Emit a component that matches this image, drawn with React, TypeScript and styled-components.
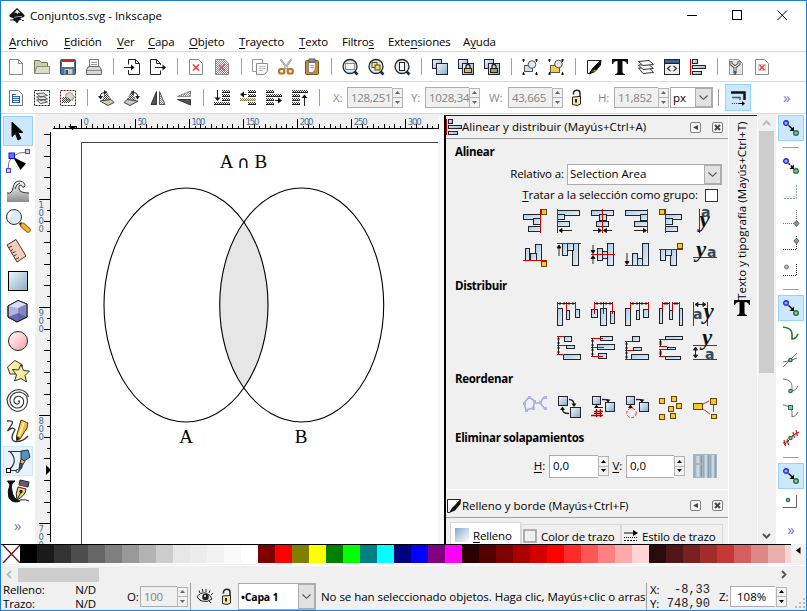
import React from 'react';
import styled, { createGlobalStyle, css } from 'styled-components';

const Global = createGlobalStyle`
  html, body { margin: 0; padding: 0; overflow: hidden; }
  body { font: 11.5px/16px "Open Sans", "Noto Sans", sans-serif; color: #000; }
  * { box-sizing: border-box; }
  u { text-decoration: underline; text-underline-offset: 2px; text-decoration-thickness: 1px; }
`;

/* ---------- window frame ---------- */
const Window = styled.div`
  width: 807px; height: 611px; background: #fff; border: 1px solid #1a7fd4;
  display: flex; flex-direction: column; overflow: hidden;
`;
const TitleBar = styled.div`
  height: 29px; flex: none; display: flex; align-items: center; padding-left: 8px;
`;
const Caption = styled.div`
  margin-left: 5px; flex: 1; letter-spacing: 0; padding-top: 1px;
`;
const WindowButtons = styled.div`
  display: flex; margin-right: 1px;
  svg { margin: 0 17px; }
`;
const MenuBar = styled.nav`
  height: 22px; flex: none; display: flex; gap: 14px; padding: 4px 0 0 8px; border-bottom: 1px solid #d8d8d8;
`;
const Label = styled.span<{ $w?: number; $ls?: number; $bold?: boolean; $right?: boolean; $dim?: boolean; $size?: number }>`
  display: block; flex: none; white-space: nowrap;
  ${p => p.$w !== undefined && css`width: ${p.$w}px;`}
  letter-spacing: ${p => p.$ls ?? -0.15}px;
  ${p => p.$bold && css`font-weight: 700;`}
  ${p => p.$right && css`text-align: right;`}
  ${p => p.$dim && css`color: #8a8a8a;`}
  ${p => p.$size && css`font-size: ${p.$size}px;`}
`;
const ToolBar = styled.div<{ $h: number }>`
  height: ${p => p.$h}px; flex: none; display: flex; align-items: center; padding-left: 2px;
  border-bottom: 1px solid #d8d8d8;
`;
const ToolButton = styled.div`
  width: 26px; height: 26px; flex: none; display: flex; align-items: center; justify-content: center;
`;
const Toggle = styled.div`
  width: 26px; height: 27px; margin-left: 1px; flex: none; background: #cce8ff; border: 1px solid #99d1ff;
  display: flex; align-items: center; justify-content: center;
`;
const Separator = styled.i<{ $w?: number }>`
  width: ${p => p.$w ?? 12}px; height: 17px; flex: none; display: flex; justify-content: center;
  &::before { content: ''; width: 1px; background: #a0a0a0; }
`;
const Icon = styled.svg`display: block; overflow: visible; flex: none;`;
const Gap = styled.i<{ $w: number }>`width: ${p => p.$w}px; flex: none;`;
const More = styled.div`
  font-size: 15px; line-height: 14px; color: #7474b0; height: 15px;
`;

/* ---------- fields ---------- */
const Field = styled.div<{ $w: number; $h?: number; $off?: boolean }>`
  width: ${p => p.$w}px; height: ${p => p.$h ?? 21}px; flex: none;
  border: 1px solid #abadb3; border-right-width: 0; background: ${p => (p.$off ? '#f0f0f0' : '#fff')};
  color: ${p => (p.$off ? '#838383' : '#000')}; padding-left: 3px; display: flex; align-items: center; white-space: nowrap;
  letter-spacing: ${p => (p.$off ? -0.32 : 0)}px;
`;
const SpinBox = styled.div`
  width: 11px; height: 20px; flex: none; display: flex; flex-direction: column;
`;
const SpinHalf = styled.div`
  flex: 1; border: 1px solid #b4b4b4; background: #f2f2f2; display: flex; align-items: center; justify-content: center;
  & + & { border-top: 0; }
`;
const Select = styled.div<{ $w: number; $h: number }>`
  width: ${p => p.$w}px; height: ${p => p.$h}px; flex: none; background: #fff; border: 1px solid #abadb3;
  display: flex; align-items: center; justify-content: space-between; padding-left: 2px;
`;
const SelectBox = styled.div`
  width: 17px; height: 100%; background: #e1e1e1; border: 1px solid #adadad; flex: none;
  display: flex; align-items: center; justify-content: center;
`;
const CheckBox = styled.i`width: 13px; height: 13px; border: 1px solid #333; background: #fff; flex: none;`;

/* ---------- main area ---------- */
const Main = styled.div`height: 431px; flex: none; display: flex; overflow: hidden;`;
const ToolBox = styled.div`
  width: 34px; flex: none; padding: 2px 0 0 2px; display: flex; flex-direction: column; align-items: flex-start;
`;
const Tool = styled.div<{ $on?: boolean; $hover?: boolean }>`
  width: 30px; height: 30px; flex: none; display: flex; align-items: center; justify-content: center;
  border: 1px solid transparent;
  ${p => p.$on && css`background: #cce8ff; border-color: #99d1ff;`}
  ${p => p.$hover && css`background: #e5f3ff; border-color: #cce8ff;`}
`;
const CanvasArea = styled.div`width: 409px; flex: none; background: #f0f0f0; overflow: hidden;`;
const Dock = styled.div`
  width: 313px; flex: none; margin-top: 1px; border: 1px solid #000; border-left-width: 2px; border-right: 0; border-bottom: 0;
  border-top: 1px solid #222; display: flex; overflow: hidden; background: #f0f0f0;
`;
const Panels = styled.div`width: 283px; flex: none; border-right: 1px solid #fff;`;
const PanelHead = styled.div<{ $h: number; $pt?: number }>`
  height: ${p => p.$h}px; display: flex; align-items: center; border-bottom: 1px solid #a0a0a0; width: 282px;
  padding-top: ${p => p.$pt ?? 0}px;
`;
const HeadTitle = styled(Label)`flex: 1;`;
const HeadButton = styled.div`
  width: 11px; height: 11px; border: 1px solid #808080; border-radius: 2px; margin-right: 11px; flex: none;
  display: flex; align-items: center; justify-content: center; background: #f6f6f6;
  &:last-child { margin-right: 5px; }
`;
const AlignBody = styled.div`
  height: 351px; padding-left: 9px; border-bottom: 1px solid #fff; overflow: hidden;
`;
const Row = styled.div<{ $h: number; $pl?: number; $pt?: number }>`
  height: ${p => p.$h}px; padding: ${p => p.$pt ?? 0}px 0 0 ${p => p.$pl ?? 0}px; display: flex; align-items: center;
`;
const IconGrid = styled.div<{ $cols: number }>`
  display: grid; grid-template-columns: repeat(${p => p.$cols}, 24px); grid-auto-rows: 24px; gap: 10px;
  margin-left: ${p => 68 + (6 - p.$cols) * 34}px;
`;
const Tabs = styled.div`display: flex; align-items: flex-end; padding: 5px 0 0 4px; height: 40px;`;
const Tab = styled.div<{ $w: number; $on?: boolean }>`
  width: ${p => p.$w}px; height: ${p => (p.$on ? 36 : 34)}px; border: 1px solid #d9d9d9; border-bottom: 0; flex: none;
  background: ${p => (p.$on ? '#fff' : '#f0f0f0')}; display: flex; align-items: flex-start;
  padding: ${p => (p.$on ? '5px 0 0 4px' : '4px 0 0 1px')}; gap: 4px;
`;
const SideTab = styled.div`
  flex: 1; display: flex; flex-direction: column; align-items: center; padding: 4px 2px 0 0;
`;
const SideText = styled.div`
  writing-mode: vertical-rl; transform: rotate(180deg); height: 180px; white-space: nowrap; letter-spacing: 0.07px;
`;
const VScroll = styled.div`
  width: 19px; flex: none; background: #f0f0f0; border-left: 1px solid #fff; display: flex; flex-direction: column; align-items: center;
  padding: 6px 2px 6px 1px;
`;
const VThumb = styled.i`width: 15px; height: 242px; background: #cdcdcd; margin-top: 5px; margin-bottom: auto;`;
const SnapBar = styled.div`
  width: 29px; flex: none; background: #fff; padding: 1px 0 0 1px; display: flex; flex-direction: column; align-items: center;
`;
const SnapItem = styled.div<{ $on?: boolean }>`
  width: 26px; height: 26px; flex: none; display: flex; align-items: center; justify-content: center;
  border: 1px solid ${p => (p.$on ? '#99d1ff' : 'transparent')}; background: ${p => (p.$on ? '#cce8ff' : 'transparent')};
`;
const SnapRule = styled.i`height: 12px; flex: none; width: 16px; display: flex; align-items: center;
  &::before { content: ''; height: 1px; width: 100%; background: #a0a0a0; }`;

/* ---------- bottom ---------- */
const PaletteRow = styled.div`
  height: 22px; flex: none; background: #f0f0f0; display: flex; border-bottom: 1px solid #fff; margin-top: -1px;
`;
const Palette = styled.div`
  width: 790px; height: 20px; flex: none; border-top: 1px solid #000; border-bottom: 1px solid #fff;
  display: flex; padding-left: 2px; overflow: hidden; background: #f0f0f0;
`;
const Swatch = styled.i<{ $c: string }>`width: 17px; height: 18px; flex: none; background: ${p => p.$c};`;
const HScroll = styled.div`
  height: 17px; flex: none; background: #f0f0f0; display: flex; align-items: center; padding: 0 19px 0 5px;
`;
const HThumb = styled.i`width: 81px; height: 14px; background: #cdcdcd; margin-left: 6px; margin-right: auto;`;
const Status = styled.div`
  flex: 1; background: #f0f0f0; display: flex; align-items: center; padding-left: 2px; overflow: hidden;
`;
const Pair = styled.div<{ $w: number }>`
  width: ${p => p.$w}px; flex: none; display: grid; grid-template-columns: auto auto; justify-content: space-between; line-height: 14px;
`;
const Message = styled.div`
  width: 325px; margin-left: 5px; flex: none; overflow: hidden; white-space: nowrap; letter-spacing: -0.05px;
`;
const StatusRule = styled.i`width: 1px; height: 28px; background: #a0a0a0; flex: none;`;
const Mono = styled.span`
  font: 12px/14px "Liberation Mono", monospace; text-align: right; white-space: pre; color: #222;
`;

/* ---------- small parts ---------- */
const Tri = ({ up, c = '#000' }: { up?: boolean; c?: string }) => (
  <Icon width="5" height="3" viewBox="0 0 5 3"><path d={up ? 'M0 3L2.5 0L5 3z' : 'M0 0H5L2.5 3z'} fill={c} /></Icon>
);
const Spin = ({ off }: { off?: boolean }) => (
  <SpinBox>
    <SpinHalf><Tri up c={off ? '#666' : '#000'} /></SpinHalf>
    <SpinHalf><Tri c={off ? '#666' : '#000'} /></SpinHalf>
  </SpinBox>
);
const SelectArrow = () => (
  <SelectBox>
    <Icon width="9" height="5" viewBox="0 0 9 5"><path d="M.5 .5L4.5 4.3L8.5 .5" fill="none" stroke="#505050" strokeWidth="1.1" /></Icon>
  </SelectBox>
);

const Defs = () => (
  <Icon width="0" height="0">
    <defs>
      <linearGradient id="blue" x1="0" y1="0" x2="1" y2="1"><stop offset="0" stopColor="#a9c8e4" /><stop offset="1" stopColor="#e6f0f8" /></linearGradient>
      <linearGradient id="steel" x1="0" y1="0" x2="1" y2="1"><stop offset="0" stopColor="#f2f7fb" /><stop offset="1" stopColor="#86abc9" /></linearGradient>
      <linearGradient id="fadeBlue" x1="0" y1="0" x2="1" y2="1"><stop offset="0" stopColor="#86abce" /><stop offset="1" stopColor="#fff" /></linearGradient>
      <linearGradient id="pink" x1="0" y1="0" x2="1" y2="1"><stop offset="0" stopColor="#fff" /><stop offset="1" stopColor="#f79ca6" /></linearGradient>
      <linearGradient id="sand" x1="0" y1="0" x2="1" y2="1"><stop offset="0" stopColor="#fbf7d8" /><stop offset="1" stopColor="#f0e06a" /></linearGradient>
      <linearGradient id="greyDown" x1="0" y1="0" x2="0" y2="1"><stop offset="0" stopColor="#fff" /><stop offset="1" stopColor="#8c8c8c" /></linearGradient>
      <linearGradient id="tubes" x1="0" y1="0" x2="1" y2="0"><stop offset="0" stopColor="#8aa0b2" /><stop offset=".5" stopColor="#d4e4f0" /><stop offset="1" stopColor="#7f8f9c" /></linearGradient>
      <pattern id="dots" width="2" height="2" patternUnits="userSpaceOnUse"><path d="M0 0h1v1H0zM1 1h1v1H1z" fill="#333" /></pattern>
      <pattern id="greyDots" width="2" height="2" patternUnits="userSpaceOnUse"><path d="M0 0h1v1H0zM1 1h1v1H1z" fill="#888" /></pattern>
      <pattern id="oliveDots" width="2" height="2" patternUnits="userSpaceOnUse"><path d="M0 0h1v1H0zM1 1h1v1H1z" fill="#857c45" /></pattern>
    </defs>
  </Icon>
);

const I16 = ({ children }: { children: React.ReactNode }) => (
  <Icon width="16" height="16" viewBox="0 0 16 16" fill="none" stroke="#222">{children}</Icon>
);
const pageShape = 'M1.5 .5H10.5L14.5 4.5V15.5H1.5z';
const Sq = ({ x, y, w = 10, h = 10 }: { x: number; y: number; w?: number; h?: number }) => (
  <rect x={x} y={y} width={w} height={h} fill="url(#steel)" stroke="#223" />
);
const Lens = ({ children }: { children?: React.ReactNode }) => (
  <I16><path d="M12 12L15.500 15.500" stroke="#1d2a33" strokeWidth="2.600" /><circle cx="8" cy="7.500" r="7" fill="#dde9f2" stroke="#1c2730" strokeWidth="1.300" />{children}</I16>
);
const Handles = () => <path d="M0 1H3M1.500 0V3M13 1H16M14.500 0V3M0 15H3M1.500 13V16M13 15H16M14.500 13V16" stroke="#111" />;
const Padlock = ({ c = '#f5bd2b' }: { c?: string }) => (
  <g><path d="M8 9.500V7.500a2 2 0 0 1 4 0V9.500" stroke="#222" strokeWidth="1.300" /><rect x="6.500" y="9.500" width="7" height="4" fill={c} stroke="#222" /></g>
);

const commandGroups: React.ReactNode[][] = [
  [
    <I16><path d={pageShape} fill="#fafafa" stroke="#8a8a84" /><path d="M10.500 .5V4.500H14.500" stroke="#8a8a84" /></I16>,
    <I16><path d="M.5 14V1.500H5.500L7 3.500H13.500V7" fill="#c6cfae" stroke="#70775c" /><path d="M.5 14.500L3 7.500H15.500V14.500z" fill="#d9dfc4" stroke="#8a9172" /></I16>,
    <I16><rect x=".5" y=".5" width="15" height="15" rx="1" fill="#4f74a6" stroke="#27446d" /><rect x="2" y="1" width="12" height="7" fill="#fff" stroke="none" /><rect x="2" y="0" width="12" height="3" fill="#d8221c" stroke="none" /><rect x="4" y="9.500" width="9" height="6" fill="#c5cdd3" stroke="#5b6b78" /><rect x="5.500" y="11" width="2.500" height="4" fill="#36506f" stroke="none" /></I16>,
    <I16><path d="M3.500 8V.5H12.500V8" fill="#fff" stroke="#777" /><path d="M5 3.500H11M5 5.500H11" stroke="#999" /><path d="M2.500 7.500L.5 11V15.500H15.500V11L13.500 7.500z" fill="#d9d9d9" stroke="#666" /><path d="M1 11.500H15" stroke="#888" /></I16>,
  ],
  [
    <I16><path d="M4.500 5.500V.5H11.500L15.500 4.500V15.500H4.500V11M11.500 .5V4.500H15.500" fill="none" /><path d="M0 8.500H8" /><path d="M7 5.500L10.500 8.500L7 11.500z" fill="#111" stroke="none" /></I16>,
    <I16><path d="M10.500 6V4.500L6.500 .5H.5V15.500H10.500V11.500M6.500 .5V4.500H10.500" /><path d="M5 8.500H14" /><path d="M12.500 5.500L16 8.500L12.500 11.500z" fill="#111" stroke="none" /></I16>,
  ],
  [
    <I16><path d={pageShape} fill="#fafafa" stroke="#8a8a84" /><path d="M5 5.500L11 11.500M11 5.500L5 11.500" stroke="#f03a3a" strokeWidth="1.600" /></I16>,
    <I16><path d={pageShape} fill="url(#greyDots)" stroke="#888" /><path d="M5 5.500L11 11.500M11 5.500L5 11.500" stroke="#c05a5a" strokeWidth="1.300" /></I16>,
  ],
  [
    <I16><path d="M.5 .5H10.500V12.500H.5z" fill="#fff" stroke="#9a9a9a" /><path d="M4.500 4.500H15.500V12L12.500 15.500H4.500z" fill="#fafafa" stroke="#8a8a8a" /><path d="M7 7.500H13M7 9.500H13M7 11.500H11" stroke="#bbb" /></I16>,
    <I16><path d="M2.500 0L9.500 10M13.500 0L6.500 10" stroke="#8a8a8a" strokeWidth="2" /><path d="M2.500 0L9.500 10M13.500 0L6.500 10" stroke="#ddd" strokeWidth=".8" /><rect x="1.200" y="10" width="5" height="4.500" rx="1.500" stroke="#b8741a" strokeWidth="2.200" /><rect x="9.700" y="10" width="5" height="4.500" rx="1.500" stroke="#b8741a" strokeWidth="2.200" /></I16>,
    <I16><rect x="1.500" y="1.500" width="13" height="14" rx="1" fill="#c08a38" stroke="#7a5214" /><path d="M4.500 3.500H11.500V10L9 13.500H4.500z" fill="#f4f4f2" stroke="#888" /><rect x="5" y="0" width="6" height="3" fill="#999" stroke="#555" /><path d="M6 6.500H10M6 8.500H10" stroke="#aaa" /></I16>,
  ],
  [
    <Lens><rect x="3.500" y="4.500" width="9" height="6" stroke="#222" strokeDasharray="1 1" fill="#fff" /></Lens>,
    <Lens><rect x="4" y="3.500" width="5" height="5" fill="#f8e4a4" stroke="#5c4a12" /><rect x="7" y="6" width="5" height="5" fill="#f8d060" stroke="#5c4a12" /></Lens>,
    <Lens><rect x="5.500" y="3.500" width="5" height="8" fill="#fff" stroke="#222" /></Lens>,
  ],
  [
    <I16><Sq x={.5} y={.5} w={9} h={9} /><Sq x={4.500} y={4.500} w={11} h={11} /></I16>,
    <I16><Sq x={.5} y={.5} w={9} h={9} /><Sq x={4.500} y={4.500} w={11} h={11} /><Padlock /></I16>,
    <I16><Sq x={.5} y={.5} w={9} h={9} /><Sq x={4.500} y={4.500} w={11} h={11} /><Padlock c="#8cad4c" /></I16>,
  ],
  [
    <I16><Handles /><rect x="2.500" y="6.500" width="8" height="6" fill="#cfdfeb" stroke="#456" /><circle cx="10" cy="5.500" r="3.800" fill="#dfeaf2" stroke="#456" /></I16>,
    <I16><Handles /><rect x="2.500" y="6.500" width="9" height="7" fill="#f4cc48" stroke="#654" /><circle cx="10.500" cy="5" r="3.800" fill="#dfeaf2" stroke="#456" /></I16>,
  ],
  [
    <I16><path d="M1.500 1.500H14.500L10 7L3.500 14.500H1.500z" fill="#fff" stroke="#222" /><path d="M15 1L14.500 6L9 12.500L3 15L7 9z" fill="#111" stroke="#111" /><path d="M5 13L9 10.500L10 12z" fill="#b99754" stroke="none" /></I16>,
    <I16><path d="M0 0H16V5H15Q14.500 2 10.500 2V13Q10.500 15 13 15V16H3V15Q5.500 15 5.500 13V2Q1.500 2 1 5H0z" fill="#0b0b0b" stroke="none" /></I16>,
    <I16><path d="M.5 9L11 8.500L15.500 13.500L5 14.500z" fill="#fff" stroke="#333" /><path d="M.5 6L11 5.500L15.500 9.500L5 10.500z" fill="#fff" stroke="#333" /><path d="M.5 2.500L11 1.500L15.500 5.500L5 6.500z" fill="#fff" stroke="#333" /></I16>,
    <I16><rect x=".5" y=".5" width="15" height="15" fill="#f0f0ee" stroke="#222" /><rect x="1" y="1" width="14" height="3" fill="#3d5f88" stroke="none" /><path d="M1 4.500H15" /><path d="M6.500 7L3.500 9.500L6.500 12M9.500 7L12.500 9.500L9.500 12" stroke="#333" strokeWidth="1.200" /></I16>,
    <I16><path d="M.5 0V16" stroke="#c00" /><Sq x={2.500} y={.5} w={5} h={4} /><Sq x={2.500} y={6.500} w={13} h={3} /><Sq x={2.500} y={12.500} w={9} h={3} /></I16>,
  ],
  [
    <I16><path d={pageShape} fill="#e6e6e2" stroke="#9a9a94" /><path d="M3 2V5L7 8L11 5V2M7 8V14" stroke="#444" strokeWidth="3" /><path d="M3 2.500V5L7 8L11 5V2.500M7 8V12" stroke="#e4e4e4" strokeWidth="1.300" /><path d="M7 12.500V16" stroke="#3c65a8" strokeWidth="2.400" /></I16>,
    <I16><path d={pageShape} fill="#fafafa" stroke="#8a8a84" /><rect x="4.500" y="5.500" width="7" height="6" fill="#f4f4f4" stroke="#ccc" /><path d="M5.500 6L10.500 11M10.500 6L5.500 11" stroke="#f03a3a" strokeWidth="1.400" /></I16>,
  ],
];

/* four stacked bars used by the stacking-order buttons */
const Bars = ({ wide, x }: { wide: number; x: number }) => (
  <g stroke="none">
    {[0, 4, 8, 12].map((y, i) => {
      const full = i === wide;
      return (
        <g key={y}>
          <rect x={full ? 0 : x} y={y} width={full ? 16 : 8} height="3" fill={full && (wide === 2) ? 'url(#oliveDots)' : 'url(#dots)'} />
          <rect x={full ? 0 : x} y={y + 2} width={full ? 16 : 8} height="1" fill="#222" opacity={full && wide === 2 ? .25 : 1} />
        </g>
      );
    })}
  </g>
);
const selectGroups: React.ReactNode[][] = [
  [
    <I16><path d={pageShape} fill="#fafafa" stroke="#777" /><path d="M4 4.500H8M4 6.500H12M4 8.500H12M4 10.500H12M4 12.500H12M4.500 4V13M11.500 6V13" stroke="#2f62a6" strokeWidth="1.100" /></I16>,
    <I16><rect x=".5" y=".5" width="15" height="15" stroke="#111" strokeDasharray="2 1" /><path d="M2.500 10L9.500 9.500L13.500 12L6.500 13.500zM2.500 7L9.500 6.500L13.500 9L6.500 10.500zM2.500 3.500L9.500 3L13.500 5.500L6.500 7z" fill="#e4e4e4" stroke="#555" /></I16>,
    <I16><rect x=".5" y=".5" width="15" height="15" stroke="#711" strokeDasharray="2 1" /><circle cx="9.500" cy="6.500" r="4" fill="#dcd8c4" stroke="#999" /><path d="M2 13V7H7L11 10L9 13z" fill="url(#dots)" stroke="none" /><path d="M12 11L15 6" stroke="#aa7" /></I16>,
  ],
  [
    <I16><path d="M2.500 7V5Q3 2.500 7 2.500" /><path d="M0 6H5L2.500 9.500zM6 0L9 2.500L6 5z" fill="#222" stroke="none" /><path d="M8 1L13 10L4 12z" fill="url(#dots)" stroke="#555" strokeDasharray="1 1" /><path d="M2 11L13 9.500L16 12.500L10 15.500z" fill="#d0cba8" stroke="#444" /></I16>,
    <I16><path d="M13.500 7V5Q13 2.500 9 2.500" /><path d="M11 6H16L13.500 9.500zM10 0L7 2.500L10 5z" fill="#222" stroke="none" /><path d="M8 1L3 10L12 12z" fill="url(#dots)" stroke="#555" strokeDasharray="1 1" /><path d="M14 11L3 9.500L0 12.500L6 15.500z" fill="#c8c8c0" stroke="#444" /></I16>,
    <I16><path d="M6.500 1.500V14.500H1z" fill="#555" stroke="#333" /><path d="M9.500 1.500V14.500H15z" fill="url(#greyDots)" stroke="#555" /></I16>,
    <I16><path d="M14.500 6.500H1.500L14.500 1z" fill="url(#greyDots)" stroke="#888" /><path d="M14.500 9.500H1.500L14.500 15z" fill="#555" stroke="#333" /></I16>,
  ],
  [
    <I16><Bars wide={3} x={8} /><path d="M3.500 0V10" /><path d="M.5 7.500H6.500L3.500 11z" fill="#111" stroke="none" /></I16>,
    <I16><Bars wide={2} x={8} /><path d="M1 4.500H6.500" /><path d="M4 1.500L0 4.500L4 7.500z" fill="#111" stroke="none" /></I16>,
    <I16><Bars wide={1} x={0} /><path d="M9 10.500H14" /><path d="M12 7.500L16 10.500L12 13.500z" fill="#111" stroke="none" /></I16>,
    <I16><Bars wide={0} x={0} /><path d="M12.500 6V16" /><path d="M9.500 8H15.500L12.500 4.500z" fill="#111" stroke="none" /></I16>,
  ],
];

/* ---------- toolbox drawings ---------- */
const T24 = ({ children }: { children: React.ReactNode }) => (
  <Icon width="24" height="24" viewBox="0 0 24 24" fill="none" stroke="#222">{children}</Icon>
);
const tools: React.ReactNode[] = [
  <T24><path d="M6 3V17.500L9.500 14.500L12 21L15 19.500L12 13.500H17z" fill="#000" stroke="#000" /></T24>,
  <T24><path d="M2 21Q1 3 22 3" stroke="#777" /><path d="M7 8L20 14.500L14.500 21z" fill="#000" stroke="none" /><rect x="3" y="4" width="5.500" height="5.500" fill="#6c6cff" stroke="#1414c8" /><rect x="19.500" y=".5" width="4" height="4" fill="#ccf" stroke="#4a4ad0" /><rect x=".5" y="19.500" width="4" height="4" fill="#ccf" stroke="#4a4ad0" /></T24>,
  <T24><path d="M1 14Q6 15 7 9Q8 2 14 2Q19 3 19 7Q17 10 15 6Q12 6 13 10Q14 14 23 14V23H1z" fill="url(#greyDown)" stroke="none" /><path d="M1 14Q6 15 7 9Q8 2 14 2Q19 3 19 7Q17 10 15 6Q12 6 13 10Q14 14 23 14M9 10Q10 5 14 4" stroke="#333" /></T24>,
  <T24><path d="M14 14L17 17" stroke="#111" strokeWidth="3" /><path d="M17 16.500L22 21" stroke="#9a6510" strokeWidth="5.600" strokeLinecap="round" /><path d="M17 16.500L22 21" stroke="#f3b32c" strokeWidth="3.600" strokeLinecap="round" /><circle cx="8" cy="8" r="7.500" fill="#dde9f3" stroke="#333" /><path d="M3 9Q3 3 9 3" stroke="#fff" strokeWidth="2" /></T24>,
  <T24><path d="M1 6L10 .5L20 17L11 23z" fill="#f5cdbd" stroke="#4d2f25" /><path d="M3 8.500L6 7M5 11.500L7 10.500M6.500 14L9.500 12.500M8 17L10.500 15.500M10 20L13 18.500" stroke="#4d2f25" /></T24>,
  <T24><rect x="2.500" y="2.500" width="19" height="19" fill="url(#steel)" stroke="#000" /></T24>,
  <T24><path d="M2 7L12 1.500L21 5V18L11 23L2 18z" fill="#b4b4e0" stroke="#222" /><path d="M2 7L12 9L21 5L12 1.500z" fill="#dcdcf4" stroke="none" /><path d="M12 9V22.500L21 18V5z" fill="#8286c2" stroke="none" /><path d="M2 18L12 14L21 18L11 23z" fill="#4d55a6" stroke="none" opacity=".75" /><path d="M2 7L12 1.500L21 5V18L11 23L2 18z" /></T24>,
  <T24><circle cx="12" cy="12" r="9.500" fill="url(#pink)" stroke="#222" /></T24>,
  <T24><path d="M1.500 8L9 1.500L16.500 6L14 15L4 15z" fill="url(#sand)" stroke="#333" /><path d="M15 5.500L17.500 11.500L23.500 12L19 16.500L20.500 23L15 19.500L8.500 22L10.500 16L6.500 10.500L12.500 11z" fill="url(#sand)" stroke="#333" /></T24>,
  <T24><path d="M12 12.500Q13.500 11 13.500 13Q13 15.500 10.500 15Q7.500 14 8 10.500Q9.500 6.500 14 7.500Q18.500 9.500 17.500 14.500Q15.500 19.500 10 19Q3.500 17 4 10Q6 3 13.500 3Q22 4.500 21.500 13Q20 22 10.500 22.500Q1.500 20 1 10Q4 1 13 .5Q21 1.500 22.500 8" stroke="#333" strokeWidth="1.100" /></T24>,
  <T24><path d="M1 2Q8 1 6 5L1.500 12Q7 7 9 11Q3 20 9 22.500Q17 23 22 17" stroke="#333" strokeWidth="1.300" /><path d="M15 1L22 4L21 9L14 20L10.500 21.500V17z" fill="#f5bb33" stroke="#4d3810" /><path d="M18 3L13 17" stroke="#fff3c0" strokeWidth="2" /><path d="M10.500 17L14 19L10.500 22z" fill="#222" stroke="none" /></T24>,
  <T24><path d="M2 2.500H15M4 2.500Q13 12 3 21M5 21.500H13Q18 18 15 12" stroke="#333" strokeWidth="1.200" /><path d="M15 2L22 1L24 8L18.500 12L15 10z" fill="#5b8fbe" stroke="#1d3446" /><path d="M15 10L19 12L17 15.500L14 14z" fill="#efb94a" stroke="#333" /><path d="M14 14L17 15.500L13 20z" fill="#3a6b99" stroke="#223" /><rect x=".5" y="19.500" width="4" height="4" fill="#fff" stroke="#000" /><circle cx="11.500" cy="22" r="1.500" fill="#fff" /></T24>,
  <T24><path d="M1.500 2H9Q4 4 6 12Q7 20 14 22Q7 25 3 19Q1 12 4 6z" fill="#111" stroke="#111" /><path d="M14 1L23 3L22 8L13 6z" fill="#43698e" stroke="#223" /><path d="M13.500 5L20 7" stroke="#c33" strokeWidth="2" /><path d="M12 8L20 10Q20 16 11 21Q9 15 12 8z" fill="#f2d37c" stroke="#222" /><path d="M11 21L15 13" /><circle cx="15" cy="12.500" r="1.300" fill="#222" /><path d="M14 21Q20 20 23 22" /></T24>,
];

/* ---------- align & distribute drawings ---------- */
type Box = [number, number, number, number];
interface Glyph { b?: Box[]; r?: string; k?: string; y?: [number, number]; }
const alignGlyphs: Glyph[] = [
  { b: [[.5, 5.500, 17, 5], [5.500, 17.500, 12, 5], [10.500, 9.500, 7, 6]], r: 'M17.500 0V24', y: [18.500, .5] },
  { b: [[.5, 1.500, 22, 5], [.5, 12.500, 12, 5], [.5, 5.500, 7, 5]], r: 'M.5 0V24', k: 'M2 21.500H15M2 21.500l3 -2v4z' },
  { b: [[.5, 1.500, 22, 5], [5.500, 12.500, 12, 5], [8.500, 5.500, 7, 6]], r: 'M11.500 0V24', k: 'M2 21.500H9M10.500 21.500l-3 -2v4zM21 21.500H14M12.500 21.500l3 -2v4z' },
  { b: [[.5, 1.500, 22, 5], [9.500, 12.500, 13, 5], [15.500, 5.500, 7, 6]], r: 'M22.500 0V24', k: 'M9 21.500H21M21.500 21.500l-3 -2v4z' },
  { b: [[6.500, 5.500, 16, 5], [6.500, 17.500, 12, 5], [6.500, 9.500, 7, 6]], r: 'M6.500 0V24', y: [.5, .5] },
  {},
  { b: [[2.500, 5.500, 4, 12], [12.500, 1.500, 6, 16], [7.500, 10.500, 6, 7]], r: 'M0 17.500H24', y: [18.500, 18.500] },
  { b: [[5.500, .5, 5, 12], [15.500, .5, 6, 22], [10.500, .5, 6, 7]], r: 'M0 .5H24', k: 'M2 2V13M2 2l-2 3h4z' },
  { b: [[6.500, 5.500, 5, 12], [16.500, .5, 6, 22], [11.500, 8.500, 5, 7]], r: 'M0 11.500H24', k: 'M2 2V9M2 10.500l-2 -3h4zM2 21V14M2 12.500l-2 3h4z' },
  { b: [[7.500, 10.500, 5, 12], [17.500, .5, 6, 22], [12.500, 15.500, 5, 7]], r: 'M0 22.500H24', k: 'M2 10V20M2 21.500l-2 -3h4z' },
  { b: [[1.500, 6.500, 5, 11], [11.500, 6.500, 6, 16], [6.500, 6.500, 6, 6]], r: 'M0 6.500H24', y: [18.500, .5] },
];
const distGlyphs: Glyph[] = [
  { b: [[.5, 6.500, 5, 17], [9.500, 8.500, 3, 9], [18.500, 7.500, 4, 8]], r: 'M.5 0V7M9.500 0V9M18.500 0V8', k: 'M1 1.500H18M3 0v3M7 0v3M12 0v3M16 0v3' },
  { b: [[.5, 7.500, 6, 8], [9.500, 6.500, 6, 17], [19.500, 9.500, 4, 12]], r: 'M3.500 0V12M12.500 0V12M21.500 0V12', k: 'M4 1.500H21M6 0v3M10 0v3M15 0v3M19 0v3' },
  { b: [[.5, 6.500, 5, 17], [11.500, 8.500, 3, 9], [18.500, 7.500, 5, 8]], r: 'M5.500 0V7M14.500 0V9M23.500 0V8', k: 'M6 1.500H23M8 0v3M12 0v3M17 0v3M21 0v3' },
  { b: [[.5, 6.500, 3, 15], [10.500, 8.500, 3, 9], [20.500, 6.500, 3, 17]], r: 'M3.500 0V7M10.500 0V9M13.500 0V9M20.500 0V7', k: 'M4 1.500H10M6 0v3M8 0v3M14 1.500H20M16 0v3M18 0v3' },
  {},
  { b: [[7.500, .5, 7, 5], [9.500, 9.500, 8, 3], [6.500, 18.500, 17, 5]], r: 'M0 .5H7M0 9.500H9M0 18.500H7', k: 'M1.500 1V18M0 3h3M0 7h3M0 12h3M0 16h3' },
  { b: [[9.500, .5, 12, 4], [6.500, 8.500, 17, 5], [7.500, 17.500, 8, 5]], r: 'M0 2.500H12M0 11.500H13M0 20.500H12', k: 'M1.500 3V20M0 5h3M0 9h3M0 14h3M0 18h3' },
  { b: [[7.500, .5, 7, 5], [8.500, 11.500, 8, 3], [6.500, 18.500, 17, 5]], r: 'M0 5.500H7M0 14.500H8M0 23.500H7', k: 'M1.500 6V23M0 8h3M0 12h3M0 17h3M0 21h3' },
  { b: [[6.500, .5, 17, 3], [8.500, 11.500, 8, 2], [6.500, 20.500, 15, 3]], r: 'M0 3.500H7M0 10.500H8M0 13.500H8M0 20.500H7', k: 'M1.500 4V10M0 6h3M0 8h3M1.500 14V20M0 16h3M0 18h3' },
];
const Yellow = ({ x, y, w = 5, h = 5 }: { x: number; y: number; w?: number; h?: number }) => (
  <rect x={x} y={y} width={w} height={h} fill="#fbc52b" stroke="#5d4407" />
);
const Boxes = ({ g }: { g: Glyph }) => (
  <T24>
    {g.b?.map((b, i) => <rect key={i} x={b[0]} y={b[1]} width={b[2]} height={b[3]} fill="url(#blue)" stroke="#1d262d" />)}
    {g.r && <path d={g.r} stroke="#d00000" />}
    {g.k && <path d={g.k} stroke="#111" fill="#111" strokeWidth=".9" />}
    {g.y && <Yellow x={g.y[0]} y={g.y[1]} />}
  </T24>
);
const GlyphA = styled.text`font: 700 14px "DejaVu Sans", sans-serif; fill: #33475f; stroke: none;`;
const GlyphY = styled.text`font: italic 700 23px "Liberation Serif", serif; fill: #111; stroke: none;`;
const alignIcons = alignGlyphs.map((g, i) => i === 5
  ? <T24><path d="M6.500 0V24" stroke="#d00000" /><GlyphY x="6.500" y="18">y</GlyphY><GlyphA x="8" y="8">a</GlyphA></T24>
  : <Boxes g={g} />);
alignIcons.push(<T24><path d="M0 14.500H24" stroke="#d00000" /><GlyphY x="3" y="14">y</GlyphY><GlyphA x="14" y="14">a</GlyphA></T24>);
const distIcons = distGlyphs.map((g, i) => i === 4
  ? <T24><path d="M.5 0V24M14.500 0V24" stroke="#d00000" /><path d="M2 2.500H13M2 2.500l3 -2v4zM13 2.500l-3 -2v4z" fill="#111" /><GlyphA x="0" y="17">a</GlyphA><GlyphY x="10.500" y="17">y</GlyphY></T24>
  : <Boxes g={g} />);
distIcons.push(<T24><path d="M0 9.500H24M0 23.500H24" stroke="#d00000" /><path d="M2.500 12V21M2.500 11l-2 3h4zM2.500 22l-2 -3h4z" fill="#111" /><GlyphY x="9" y="9">y</GlyphY><GlyphA x="12" y="23">a</GlyphA></T24>);

const Swap = ({ s, children }: { s: number; children?: React.ReactNode }) => (
  <T24>
    <path d={`M${s + 3} 4.500Q17 4.500 17 ${s === 9 ? 10 : 5}`} stroke="#222" strokeWidth="1.300" />
    <path d={s === 9 ? 'M14.500 8.500H19.500L17 12z' : 'M14.500 4.500H19.500L17 7.500z'} fill="#111" stroke="none" />
    <Sq x={1.500} y={1.500} w={s} h={s} /><Sq x={22.500 - s} y={s === 9 ? 12.500 : 7.500} w={s + 1} h={s === 9 ? 10 : 9} />{children}
  </T24>
);
const reorderIcons = [
  <T24><path d="M2 7L7 1L13 5L11 12L4 14L2 7M12 7L18 7L22 1M18 7L23 13" stroke="#a9a9dc" strokeWidth="1.600" transform="translate(-1 1)" /><path d="M0 7h3v3H0zM5 1h3v3H5zM10 5h3v3h-3zM9 12h3v3H9zM2 14h3v3H2zM16 6h3v3h-3zM21 1h3v3h-3zM21 12h3v3h-3z" fill="#a9b4f2" stroke="none" /></T24>,
  <Swap s={9}><path d="M5.500 14Q5 18.500 12 18.500" stroke="#222" strokeWidth="1.300" /><path d="M3 15H8L5.500 11.500z" fill="#111" stroke="none" /></Swap>,
  <Swap s={8}><path d="M3 13H8L5.500 9.500z" fill="#111" stroke="none" /><path d="M5 12.500H12" /><path d="M0 20.500H12M3 16.500H12M5.500 14V22M9.500 14V22" stroke="#c40000" strokeWidth="1.300" /><path d="M3 18.500H11" stroke="#111" /></Swap>,
  <Swap s={8}><path d="M3 13H8L5.500 9.500z" fill="#111" stroke="none" /><circle cx="6.500" cy="18" r="4.700" stroke="#e03030" strokeDasharray="3 1.500" /></Swap>,
  <T24><Yellow x={.5} y={3.500} /><Yellow x={12.500} y={1.500} /><Yellow x={17.500} y={8.500} /><Yellow x={9.500} y={11.500} /><Yellow x={.5} y={19.500} /><Yellow x={11.500} y={18.500} /></T24>,
  <T24><path d="M10 9L16 6M10 14L17 19M20.500 10V17" stroke="#e02020" /><Yellow x={.5} y={8.500} w={9} h={6} /><Yellow x={17.500} y={3.500} w={6} h={6} /><Yellow x={18.500} y={19.500} h={4} /></T24>,
];

/* ---------- snap bar drawings ---------- */
const S16 = ({ children }: { children: React.ReactNode }) => (
  <Icon width="16" height="16" viewBox="0 0 16 16" fill="none" stroke="#777">{children}</Icon>
);
const SnapMain = ({ faint }: { faint?: boolean }) => (
  <S16><circle cx="3" cy="3" r="2.300" fill="#a9b4ff" stroke="#2424e0" strokeWidth="1.400" /><circle cx="13" cy="13" r="2.300" fill="#9fb6c8" stroke="#1f7a2c" strokeWidth="1.400" /><path d="M5.500 5.500L9.500 9" stroke="#000" strokeWidth="1.400" strokeDasharray={faint ? '2 1' : undefined} /><path d="M11 6.500V11H6.500z" fill="#000" stroke="none" /></S16>
);
const Dot = ({ x, y }: { x: number; y: number }) => <circle cx={x} cy={y} r="1.700" fill="#9fb6c8" stroke="#1f7a2c" strokeWidth="1.200" />;
const curve = 'M0 1Q9 2 9 8V13Q13 13 15 8';
const snapGroups: { on?: boolean; n: React.ReactNode }[][] = [
  [{ on: true, n: <SnapMain /> }],
  [
    { n: <SnapMain faint /> },
    { n: <S16><path d="M13.500 1V14.500H0" stroke="#86a886" strokeDasharray="2 1" /><path d="M11.500 12.500H0" stroke="#ccc" strokeDasharray="1 1" /></S16> },
    { n: <S16><path d="M13.500 0V13.500H0" stroke="#777" strokeDasharray="1 1" /><path d="M13.500 10.500L16 13.500L13.500 16.500L11 13.500z" fill="#899" stroke="#566" /></S16> },
    { n: <S16><path d="M13.500 0V13.500H0" stroke="#333" strokeDasharray="1 1" /><path d="M13.500 2L16 5L13.500 8L11 5z" fill="#899" stroke="#566" /></S16> },
    { n: <S16><path d="M13.500 2V13.500H0" stroke="#333" strokeDasharray="1 1" /><circle cx="3.500" cy="5" r="2" fill="#abb" stroke="#687" /></S16> },
  ],
  [
    { on: true, n: <SnapMain /> },
    { n: <S16><path d={curve} stroke="#16801c" strokeWidth="1.600" /></S16> },
    { n: <S16><path d="M0 15L14 1M0 10Q8 9 14 6" stroke="#666" /><Dot x={7.500} y={8} /></S16> },
    { n: <S16><path d={curve} /><Dot x={7.500} y={13} /></S16> },
    { n: <S16><path d={curve} /><rect x="5.500" y="1.500" width="4" height="4" fill="#9fb6c8" stroke="#1f7a2c" /></S16> },
    { n: <S16><path d="M1 15L14 2" stroke="#333" strokeDasharray="3 1" /><path d="M1 10L2.500 16M4 9L5.500 15M0 13L6 11M10 2L11.500 8M13 0L14.500 6M9 6L16 2" stroke="#c62020" strokeWidth="1.200" /><Dot x={7.500} y={8} /></S16> },
  ],
  [
    { on: true, n: <SnapMain /> },
    { n: <S16><path d="M13.500 1V13.500H0" stroke="#666" /><Dot x={5} y={6} /></S16> },
  ],
];

/* ---------- drawing canvas with rulers ---------- */
const RulerText = styled.text`font: 8.500px "DejaVu Sans", sans-serif; fill: #4a6a94;`;
const ArtText = styled.text`font: 19px "Liberation Serif", serif; fill: #000; text-anchor: middle;`;
const Cap = styled.tspan`font: 17px "DejaVu Sans", sans-serif;`;
const Canvas = () => {
  const hTicks: string[] = [];
  for (let i = -5; i * 5.405 + 46.500 < 404; i++) {
    const x = Math.round(46 + i * 5.405) + .5;
    const len = i % 10 === 0 ? 10 : i % 2 === 0 ? 5 : 3;
    if (x > 17) hTicks.push(`M${x} ${15 - len}V15`);
  }
  const vTicks: string[] = [];
  for (let i = -6; i < 32; i++) {
    const y = Math.round(85 + i * 10.81) + .5;
    const len = i % 10 === 0 ? 11 : i % 2 === 0 ? 6 : 3;
    if (y > 18) vTicks.push(`M${15 - len} ${y}H15`);
  }
  return (
    <svg width="409" height="431" viewBox="0 0 409 431">
      <rect x="16" y="16" width="387" height="415" fill="#fff" />
      <rect x="403" y="2" width="6" height="429" fill="#f8f8f8" />
      <path d="M18 14.500H403M15.500 18V428" stroke="#000" />
      <path d={hTicks.join('') + vTicks.join('')} stroke="#000" />
      <path d="M33 12H42L37.500 16zM11 351V361L16 356z" fill="#000" />
      {[0, 50, 100, 150, 200, 250, 300].map((n, i) => <RulerText key={n} x={48.500 + i * 54.050} y="11" textLength={String(n).length * 4.600}>{n}</RulerText>)}
      {['1000', '900', '800', '700'].map((n, i) => n.split('').map((c, j) => i * 108.100 + j * 8 < 345 && <RulerText key={n + j} x="3.500" y={93.500 + i * 108.100 + j * 8}>{c}</RulerText>))}
      <path d="M46.500 431V28.500H403" stroke="#444" fill="none" />
      <path d="M209 107.500A82 117 0 0 1 209 274.500A82 117 0 0 1 209 107.500z" fill="#e6e6e6" />
      <g fill="none" stroke="#000" strokeWidth="1.100">
        <ellipse cx="151" cy="191" rx="82" ry="117" />
        <ellipse cx="266.700" cy="191" rx="82" ry="117" />
      </g>
      <ArtText x="208.500" y="54">A <Cap>∩</Cap> B</ArtText>
      <ArtText x="151" y="329">A</ArtText>
      <ArtText x="266" y="329">B</ArtText>
    </svg>
  );
};

const menus: [string, string, string, number][] = [
  ['', 'A', 'rchivo', 41], ['', 'E', 'dición', 39], ['', 'V', 'er', 17], ['', 'C', 'apa', 27], ['', 'O', 'bjeto', 36],
  ['', 'T', 'rayecto', 46], ['', 'T', 'exto', 29], ['Filtro', 's', '', 32], ['Exte', 'n', 'siones', 61], ['A', 'y', 'uda', 34],
];
const swatches = (
  '000000 1a1a1a 333333 4d4d4d 666666 808080 999999 b3b3b3 cccccc e6e6e6 ececec f2f2f2 f9f9f9 ffffff ' +
  '800000 ff0000 808000 ffff00 008000 00ff00 008080 00ffff 000080 0000ff 800080 ff00ff ' +
  '2b0000 550000 800000 aa0000 d40000 ff0000 ff2a2a ff5555 ff8080 ffaaaa ffd5d5 ' +
  '280b0b 501616 782121 a02c2c c83737 d35f5f de8787 e9afaf f4d7d7'
).split(' ');

const Groups = ({ groups }: { groups: React.ReactNode[][] }) => (
  <>{groups.map((g, i) => (
    <React.Fragment key={i}>{i > 0 && <Separator />}{g.map((n, j) => <ToolButton key={j}>{n}</ToolButton>)}</React.Fragment>
  ))}</>
);
const OpenLock = () => (
  <I16><path d="M4.500 4.500V3a3 2.500 0 0 1 6.500 0V7" stroke="#222" strokeWidth="1.500" /><path d="M3.500 7L11.500 6.500V14L8 15.500L3.500 14.500z" fill="#f2e6a0" stroke="#222" /><path d="M7 9V12.500" strokeWidth="2" /></I16>
);
const HeadButtons = () => (
  <>
    <HeadButton><Icon width="5" height="5" viewBox="0 0 5 5"><path d="M5 0V5L0 2.500z" fill="#444" /></Icon></HeadButton>
    <HeadButton><Icon width="7" height="7" viewBox="0 0 7 7"><path d="M1 1L6 6M6 1L1 6" stroke="#444" strokeWidth="2" /></Icon></HeadButton>
  </>
);
const Cells = ({ cols, icons }: { cols: number; icons: React.ReactNode[] }) => (
  <IconGrid $cols={cols}>{icons.map((n, i) => <React.Fragment key={i}>{n}</React.Fragment>)}</IconGrid>
);

export default function App() {
  return (
    <Window>
      <Global />
      <TitleBar>
        <Icon width="16" height="16" viewBox="0 0 16 16">
          <path d="M8 0L15.500 7Q16 9 13 9.500L11 10.500L13 11.500L10 12.500L8 15.500L6 13L2.500 12L5 10.500L1 9Q0 8 .5 7z" fill="#151515" />
          <path d="M8 1.500L11.500 5L9.500 4.500L8.500 6L7 4.500L5 5.500z" fill="#e8eef4" /><path d="M5 9.500Q9 8 13 8.500" stroke="#7f93a6" fill="none" />
          <path d="M1 11.500h2v1H1zM13 12h2v1h-2z" fill="#333" />
        </Icon>
        <Caption>Conjuntos.svg - Inkscape</Caption>
        <WindowButtons>
          <Icon width="11" height="11" viewBox="0 0 11 11"><path d="M0 5.500H10" stroke="#000" /></Icon>
          <Icon width="11" height="11" viewBox="0 0 11 11"><rect x=".5" y=".5" width="9" height="9" fill="none" stroke="#000" /></Icon>
          <Icon width="11" height="11" viewBox="0 0 11 11"><path d="M.5 .5L10 10M10 .5L.5 10" stroke="#000" /></Icon>
        </WindowButtons>
      </TitleBar>
      <MenuBar>
        {menus.map(([a, b, c, w]) => <Label key={a + b + c} $w={w}>{a}<u>{b}</u>{c}</Label>)}
      </MenuBar>
      <ToolBar $h={30}><Groups groups={commandGroups} /></ToolBar>
      <ToolBar $h={32}>
        <Groups groups={selectGroups} />
        <Separator /><Gap $w={8} />
        <Label $dim $w={14}>X:</Label><Field $w={45} $off>128,251</Field><Spin off />
        <Gap $w={8} /><Label $dim $w={14}>Y:</Label><Field $w={44} $off>1028,34</Field><Spin off />
        <Gap $w={9} /><Label $dim $w={19}>W:</Label><Field $w={44} $off>43,665</Field><Spin off />
        <Gap $w={6} /><OpenLock /><Gap $w={13} />
        <Label $dim $w={16}>H:</Label><Field $w={44} $off>11,852</Field><Spin off />
        <Gap $w={1} /><Select $w={43} $h={21}>px<SelectArrow /></Select>
        <Separator $w={11} />
        <Toggle><Icon width="16" height="16" viewBox="0 0 16 16"><path d="M1 2.500H14.500V10" stroke="#111" strokeWidth="2.500" fill="none" /><path d="M2 7.500H10V10" stroke="#555" strokeWidth="1.500" fill="none" /><path d="M2 13.500H9" stroke="#333" strokeDasharray="1 1" /><path d="M9 13.500H13" stroke="#000" /><path d="M12 11L15 13.500L12 16z" /></Icon></Toggle>
        <Gap $w={32} /><More>»</More>
      </ToolBar>
      <Main>
        <ToolBox>
          {tools.map((n, i) => <Tool key={i} $on={i === 0} $hover={i === 11}>{n}</Tool>)}
          <Row $h={46} $pl={11}><More>»</More></Row>
        </ToolBox>
        <CanvasArea><Canvas /></CanvasArea>
        <Dock>
          <Panels>
            <PanelHead $h={23}>
              <Icon width="16" height="16" viewBox="0 0 16 16"><path d="M.5 0V16" stroke="#c00" /><Sq x={2.500} y={.5} w={4} h={4} /><Sq x={2.500} y={6.500} w={13} h={3} /><Sq x={2.500} y={12.500} w={9} h={3} /></Icon>
              <HeadTitle $ls={0.05}>Alinear y distribuir (Mayús+Ctrl+A)</HeadTitle><HeadButtons />
            </PanelHead>
            <AlignBody>
              <Row $h={25}><Label $bold $ls={-.3}>Alinear</Label></Row>
              <Row $h={20}><Label $w={109} $right $ls={-.1}>Relativo a:</Label><Gap $w={3} /><Select $w={155} $h={21}>Selection Area<SelectArrow /></Select></Row>
              <Row $h={22}><Label $w={243} $right $ls={-.05}><u>T</u>ratar a la selección como grupo:</Label><Gap $w={7} /><CheckBox /></Row>
              <Row $h={3} />
              <Cells cols={6} icons={alignIcons} />
              <Row $h={35} $pt={3}><Label $bold $ls={-.3}>Distribuir</Label></Row>
              <Cells cols={5} icons={distIcons} />
              <Row $h={35} $pt={3}><Label $bold $ls={-.3}>Reordenar</Label></Row>
              <Cells cols={6} icons={reorderIcons} />
              <Row $h={38}><Label $bold $ls={-.3}>Eliminar solapamientos</Label></Row>
              <Row $h={18}>
                <Label $w={90} $right><u>H</u>:</Label><Gap $w={4} /><Field $w={49} $h={23}>0,0</Field><Spin />
                <Label $w={13} $right><u>V</u>:</Label><Gap $w={4} /><Field $w={48} $h={23}>0,0</Field><Spin />
                <Gap $w={8} />
                <Icon width="24" height="24" viewBox="0 0 24 24"><rect x="0" y="0" width="24" height="24" fill="#a5b5c2" /><rect x="1" y="2" width="8" height="7" fill="url(#tubes)" /><rect x="1" y="11" width="8" height="12" fill="url(#tubes)" /><rect x="10" y="1" width="6" height="23" fill="url(#tubes)" /><rect x="17" y="1" width="6" height="23" fill="url(#tubes)" /></Icon>
              </Row>
            </AlignBody>
            <PanelHead $h={28} $pt={4}>
              <Icon width="16" height="16" viewBox="0 0 16 16"><path d="M1.500 1.500H14.500L10 7L3.500 14.500H1.500z" fill="#fff" stroke="#222" /><path d="M15 1L14.500 6L9 12.500L3 15L6 10z" fill="#111" /></Icon>
              <HeadTitle $ls={0}>Relleno y borde (Mayús+Ctrl+F)</HeadTitle><HeadButtons />
            </PanelHead>
            <Tabs>
              <Tab $w={71} $on><Icon width="14" height="14" viewBox="0 0 14 14"><rect width="14" height="14" fill="url(#fadeBlue)" /></Icon><Label><u>R</u>elleno</Label></Tab>
              <Tab $w={100}><Icon width="14" height="14" viewBox="0 0 14 14"><rect x="1" y="1" width="12" height="12" fill="none" stroke="#999" strokeWidth="1.500" /></Icon><Label>Color de trazo</Label></Tab>
              <Tab $w={102}><Icon width="15" height="14" viewBox="0 0 15 14"><path d="M1 4H12" stroke="#111" /><path d="M10 1L15 4L10 7z" /><path d="M1 8.500H14" stroke="#111" strokeDasharray="1 1" /><path d="M1 11.500H14" stroke="#111" strokeDasharray="2 1" /></Icon><Label>Estilo de trazo</Label></Tab>
            </Tabs>
          </Panels>
          <SideTab>
            <SideText>Texto y tipografía (Mayús+Ctrl+T)</SideText>
            <Icon width="16" height="16" viewBox="0 0 16 16"><path d="M0 0H16V5H15Q14.500 2 10.500 2V13Q10.500 15 13 15V16H3V15Q5.500 15 5.500 13V2Q1.500 2 1 5H0z" /></Icon>
          </SideTab>
        </Dock>
        <VScroll>
          <Icon width="9" height="6" viewBox="0 0 9 6"><path d="M1 5L4.500 1.500L8 5" fill="none" stroke="#bababa" strokeWidth="2" /></Icon>
          <VThumb />
          <Icon width="9" height="6" viewBox="0 0 9 6"><path d="M1 1L4.500 4.500L8 1" fill="none" stroke="#555" strokeWidth="2" /></Icon>
        </VScroll>
        <SnapBar>
          {snapGroups.map((g, i) => (
            <React.Fragment key={i}>{i > 0 && <SnapRule />}{g.map((s, j) => <SnapItem key={j} $on={s.on}>{s.n}</SnapItem>)}</React.Fragment>
          ))}
          <Row $h={28}><More>»</More></Row>
        </SnapBar>
      </Main>
      <PaletteRow>
        <Palette>
          <Icon width="17" height="18" viewBox="0 0 17 18"><rect width="17" height="18" fill="#fff" /><path d="M0 0L17 18M17 0L0 18" stroke="#7b1818" strokeWidth="1.400" /></Icon>
          {swatches.map((c, i) => <Swatch key={i} $c={'#' + c} />)}
        </Palette>
        <Gap $w={5} />
        <Icon width="5" height="13" viewBox="0 0 5 13"><path d="M4.500 3V10L0 6.500z" /></Icon>
      </PaletteRow>
      <HScroll>
        <Icon width="6" height="9" viewBox="0 0 6 9"><path d="M5 1L1.500 4.500L5 8" fill="none" stroke="#bababa" strokeWidth="1.800" /></Icon>
        <HThumb />
        <Icon width="6" height="9" viewBox="0 0 6 9"><path d="M1 1L4.500 4.500L1 8" fill="none" stroke="#555" strokeWidth="1.800" /></Icon>
      </HScroll>
      <Status>
        <Pair $w={93}><Label>Relleno:</Label><Label>N/D</Label><Label>Trazo:</Label><Label>N/D</Label></Pair>
        <Gap $w={31} /><Label $w={13}>O:</Label><Field $w={37} $off>100</Field><Spin off />
        <Gap $w={2} /><StatusRule /><Gap $w={6} />
        <I16><path d="M0 8Q3 3 9 4Q14 6 15 10Q10 14 5 12Q2 11 0 8z" fill="#eee" stroke="#222" /><circle cx="8.500" cy="8" r="3.300" fill="#222" stroke="none" /><path d="M3 4L2 1.500M6 3L5.500 0M9 3V0M12 4L13 1.500M14 6L16 4M1 9L4 12M12 12L14 14" /><circle cx="8" cy="7" r="1" fill="#fff" stroke="none" /></I16>
        <Gap $w={6} /><OpenLock /><Gap $w={3} />
        <Select $w={78} $h={27}><Label $bold $size={10.500} $ls={-.2}>•Capa 1</Label><SelectArrow /></Select>
        <Message>No se han seleccionado objetos. Haga clic, Mayús+clic o arrastrar</Message>
        <StatusRule /><Gap $w={3} />
        <Pair $w={60}><Label>X:</Label><Mono>-8,33</Mono><Label>Y:</Label><Mono>748,90</Mono></Pair>
        <Gap $w={9} /><Label $w={11}>Z:</Label><Field $w={45}><Gap $w={3} />108%</Field><Gap $w={1} /><Spin />
        <Gap $w={8} />
        <Icon width="10" height="22" viewBox="0 0 10 22"><path d="M8 12h2v2H8zM4 16h2v2H4zM8 16h2v2H8zM0 20h2v2H0zM4 20h2v2H4zM8 20h2v2H8z" fill="#bbb" /></Icon>
      </Status>
      <Defs />
    </Window>
  );
}
